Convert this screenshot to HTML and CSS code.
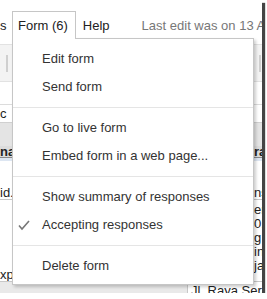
FILE: index.html
```html
<!DOCTYPE html>
<html lang="en">
<head>
    <meta charset="UTF-8">
    <title>Form menu</title>
    <link rel="stylesheet" href="styles.css">
</head>
<body>
    <div class="frame">
        <div class="menubar">
            <span class="mb-item mb-cut">s</span>
            <span class="mb-item mb-active">Form (6)</span>
            <span class="mb-item mb-help">Help</span>
            <span class="mb-status">Last edit was on 13 April</span>
        </div>

        <div class="toolbar">
            <span class="tb-sep"></span>
            <span class="tb-sep"></span>
        </div>

        <div class="spacer"></div>

        <div class="row formula">
            <span class="c-left">c</span>
        </div>

        <div class="col-heads"></div>

        <div class="row row-head">
            <span class="c-left">na</span>
            <span class="c-mid"></span>
            <span class="c-right">ra</span>
        </div>
        <div class="frozen"></div>

        <div class="row row-empty">
            <span class="c-left"></span>
            <span class="c-mid"></span>
            <span class="c-right"></span>
        </div>

        <div class="row row-one">
            <span class="c-left">id.</span>
            <span class="c-mid"></span>
            <span class="c-right">ns</span>
        </div>

        <div class="row row-wrap">
            <span class="c-left c-bottom">xp</span>
            <span class="c-mid"></span>
            <span class="c-right c-lines">er<br>01<br>g<br>in<br>ja</span>
        </div>

        <div class="row row-last">
            <span class="c-grey"></span>
            <span class="c-addr">Jl. Raya Serang</span>
        </div>

        <!-- menu Form (6) aberto -->
        <div class="dropdown">
            <div class="dd-item">Edit form</div>
            <div class="dd-item">Send form</div>
            <div class="dd-sep"></div>
            <div class="dd-item">Go to live form</div>
            <div class="dd-item">Embed form in a web page...</div>
            <div class="dd-sep"></div>
            <div class="dd-item">Show summary of responses</div>
            <div class="dd-item dd-checked">
                <svg class="dd-check" width="12" height="12" viewBox="0 0 12 12">
                    <polyline points="1,6.5 4,10 11,2" fill="none" stroke="#777" stroke-width="1.6"/>
                </svg>
                Accepting responses
            </div>
            <div class="dd-sep"></div>
            <div class="dd-item">Delete form</div>
        </div>
    </div>
</body>
</html>
```

FILE: styles.css
```css
body {
    margin: 0;
    background-color: #fff;
    font-family: "Liberation Sans", Arial, sans-serif;
    font-size: 13px;
    color: #222;
}

.frame {
    position: relative;
    width: 262px;
    height: 293px;
    overflow: hidden;
    background-color: #fff;
    box-shadow: 3px 3px 1px #444;
}

/* barra de menus */
.menubar {
    display: flex;
    align-items: flex-start;
    height: 44px;
    padding-top: 11px;
    box-sizing: border-box;
    white-space: nowrap;
}

.mb-item {
    padding-top: 2px;
    line-height: 26px;
}

.mb-cut {
    width: 12px;
    flex: none;
}

.mb-active {
    position: relative;
    z-index: 2;
    height: 28px;
    box-sizing: border-box;
    padding: 1px 7px 0 5px;
    border: 1px solid #c6c6c6;
    border-bottom: none;
    background-color: #fff;
}

.mb-help {
    padding-left: 7px;
}

.mb-status {
    margin-left: 32px;
    padding-top: 2px;
    line-height: 26px;
    color: #777;
}

/* barra de ferramentas */
.toolbar {
    display: flex;
    justify-content: space-between;
    align-items: center;
    height: 38px;
    box-sizing: border-box;
    padding: 0 1px 0 6px;
    border-top: 1px solid #e2e2e2;
    border-bottom: 1px solid #e2e2e2;
    background-color: #f3f3f3;
}

.tb-sep {
    width: 2px;
    height: 17px;
    background-color: #cfcfcf;
}

.spacer {
    height: 22px;
}

/* planilha ao fundo */
.row {
    display: flex;
    white-space: nowrap;
    overflow: hidden;
}

.c-left {
    width: 12px;
    flex: none;
    overflow: hidden;
}

.c-mid {
    flex: 1;
}

.c-right {
    width: 8px;
    flex: none;
    overflow: hidden;
    padding-left: 1px;
    border-left: 1px solid #d4d4d4;
}

.formula {
    height: 19px;
    line-height: 18px;
    box-sizing: border-box;
    border-top: 1px solid #dcdcdc;
    border-bottom: 1px solid #d0d0d0;
}

.col-heads {
    height: 23px;
    background-color: #e4e4e4;
}

.row-head {
    height: 11px;
    line-height: 11px;
    font-weight: bold;
    background-color: #dcdcdc;
}

.frozen {
    height: 4px;
    box-sizing: border-box;
    border-top: 1px solid #8a8a8a;
    background-color: #dde6f2;
}

.row-empty {
    height: 26px;
}

.row-one {
    height: 13px;
    line-height: 12px;
    box-sizing: border-box;
    border-bottom: 1px solid #c8c8c8;
}

.row-wrap {
    height: 82px;
    box-sizing: border-box;
    border-bottom: 1px solid #c8c8c8;
}

.row-wrap .c-left {
    display: flex;
    align-items: flex-end;
    line-height: 12px;
}

.c-lines {
    padding-top: 3px;
    line-height: 14px;
}

.row-last {
    height: 14px;
    line-height: 18px;
}

.c-grey {
    width: 187px;
    flex: none;
    background-color: #e9e9e9;
}

.c-addr {
    padding-left: 3px;
    border-left: 1px solid #c8c8c8;
}

/* menu suspenso */
.dropdown {
    position: absolute;
    top: 38px;
    left: 12px;
    z-index: 1;
    width: 242px;
    box-sizing: border-box;
    padding: 6px 0 4px;
    border: 1px solid #c6c6c6;
    background-color: #fff;
    color: #333;
    box-shadow: 2px 2px 3px rgba(0, 0, 0, 0.2);
}

.dd-item {
    position: relative;
    height: 28px;
    line-height: 28px;
    padding-left: 29px;
    white-space: nowrap;
}

.dd-check {
    position: absolute;
    left: 5px;
    top: 8px;
}

.dd-sep {
    height: 1px;
    margin: 6px 0;
    background-color: #e5e5e5;
}
```
